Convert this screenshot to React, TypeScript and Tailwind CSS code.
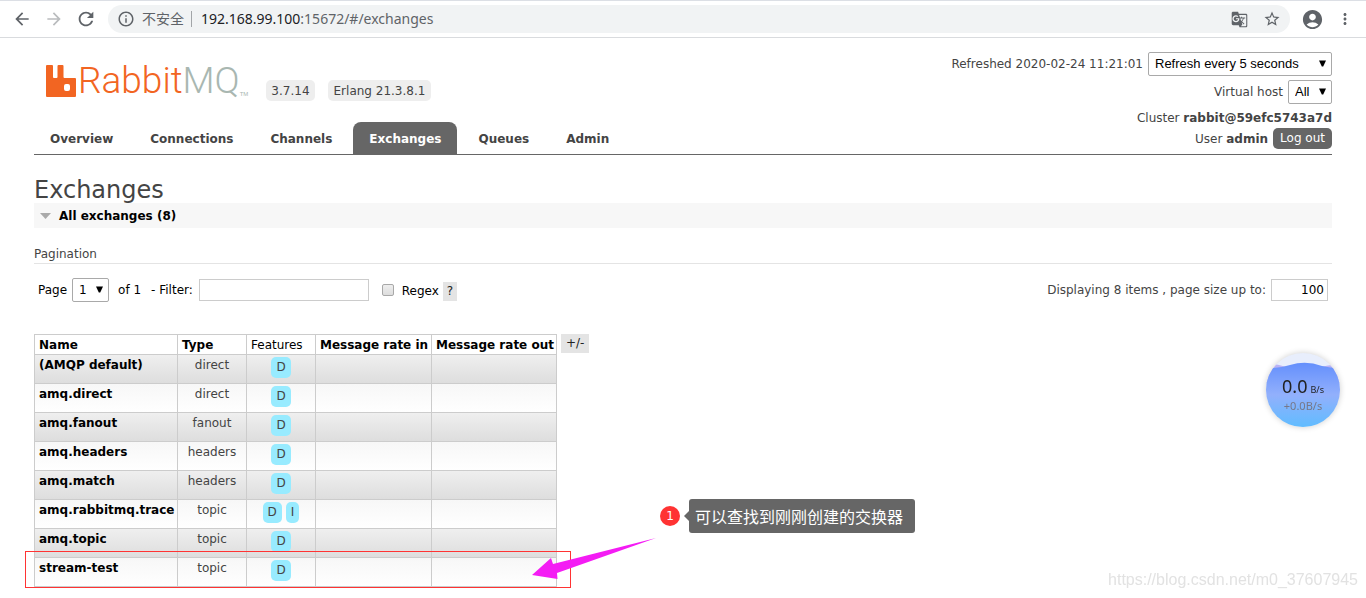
import { useState } from 'react'
import type { ReactNode } from 'react'
import clsx from 'clsx'
import {
  MdAccountCircle,
  MdArrowBack,
  MdArrowForward,
  MdGTranslate,
  MdInfoOutline,
  MdMoreVert,
  MdRefresh,
  MdStarBorder,
} from 'react-icons/md'

const tabs = ['Overview', 'Connections', 'Channels', 'Exchanges', 'Queues', 'Admin']

const exchanges = [
  { name: '(AMQP default)', type: 'direct', features: ['D'] },
  { name: 'amq.direct', type: 'direct', features: ['D'] },
  { name: 'amq.fanout', type: 'fanout', features: ['D'] },
  { name: 'amq.headers', type: 'headers', features: ['D'] },
  { name: 'amq.match', type: 'headers', features: ['D'] },
  { name: 'amq.rabbitmq.trace', type: 'topic', features: ['D', 'I'] },
  { name: 'amq.topic', type: 'topic', features: ['D'] },
  { name: 'stream-test', type: 'topic', features: ['D'] },
]

function Select({ id, className, children }: {
  id: string
  className?: string
  children: ReactNode
}) {
  return (
    <span className="relative inline-flex">
      <select
        id={id}
        className={clsx(
          'appearance-none h-6 rounded-[2px] border border-[#a9a9a9] bg-white pl-1.5 text-black',
          className,
        )}
      >
        {children}
      </select>
      <svg viewBox="0 0 7 7" className="pointer-events-none absolute right-1.5 top-2 size-[7px]">
        <path d="M0 0.5h7L4.2 6.5H2.8z" fill="#000" />
      </svg>
    </span>
  )
}

function BrowserBar() {
  const [url, setUrl] = useState('192.168.99.100:15672/#/exchanges')
  const [host, ...rest] = url.split(':')

  return (
    <div className="flex h-[38px] items-center border-b border-[#d9dbde] border-t border-t-[#dcdfe5] bg-white text-[#5f6368]">
      <button type="button" aria-label="Back" className="ml-3">
        <MdArrowBack className="size-5" />
      </button>
      <button type="button" aria-label="Forward" className="ml-3 text-[#babcbe]">
        <MdArrowForward className="size-5" />
      </button>
      <button type="button" aria-label="Reload" className="ml-[11px]">
        <MdRefresh className="size-[22px]" />
      </button>
      <div className="ml-[11px] flex h-7 flex-1 items-center rounded-full bg-[#f1f3f4] pl-[9px] pr-[9px]">
        <MdInfoOutline className="size-[18px]" />
        <span className="ml-[7px] font-['Noto_Sans','Noto_Sans_CJK_SC',sans-serif] text-sm">不安全</span>
        <span className="ml-[7px] mr-[9px] h-4 w-px bg-[#a2a5a8]" />
        <button
          type="button"
          onClick={() => setUrl(url)}
          className="flex-1 text-left font-['Noto_Sans',sans-serif] text-sm"
        >
          <span className="text-[#202124]">{host}</span>:{rest.join(':')}
        </button>
        <MdGTranslate className="size-[17px]" />
        <MdStarBorder className="ml-[15px] size-[18px]" />
      </div>
      <button type="button" aria-label="Profile" className="ml-[11px]">
        <MdAccountCircle className="size-[23px]" />
      </button>
      <button type="button" aria-label="Menu" className="ml-3 mr-3">
        <MdMoreVert className="size-[18px]" />
      </button>
    </div>
  )
}

function Logo() {
  return (
    <a href="#/" className="flex h-[42px] items-end">
      <svg viewBox="0 0 30 32" className="mb-1 h-8 w-[30px]">
        <path
          fill="#f26522"
          fillRule="evenodd"
          d="M1 0h5q1 0 1 1v11q0 1 1 1h2.500q1 0 1-1V1q0-1 1-1h4q1 0 1 1v11q0 1 1 1H29q1 0 1 1v17q0 1-1 1H1q-1 0-1-1V1q0-1 1-1zM20 19q-2 0-2 2v3q0 2 2 2h2q2 0 2-2v-3q0-2-2-2z"
        />
      </svg>
      <span className="ml-0.5 font-['Roboto',sans-serif] text-[37px] font-light leading-10 text-[#f26522]">
        Rabbit<span className="text-[#a9b7b1]">MQ</span>
      </span>
      <span className="mb-1 font-['Liberation_Sans',sans-serif] text-[6px] leading-[6px] text-[#a9b7b1]">TM</span>
    </a>
  )
}

function Header() {
  return (
    <header className="flex items-end justify-between border-b border-[#666]">
      <div>
        <div className="flex items-end pb-[21px] pl-3">
          <Logo />
          <span className="ml-[18px] rounded-[5px] bg-[#eee] px-[5px] pt-px text-xs leading-5">3.7.14</span>
          <span className="ml-[13px] rounded-[5px] bg-[#eee] px-1.5 pt-px text-xs leading-5">Erlang 21.3.8.1</span>
        </div>
        <nav className="flex gap-[5px]">
          {tabs.map((tab) => (
            <a
              key={tab}
              href={`#/${tab.toLowerCase()}`}
              className={clsx(
                'rounded-t-lg px-4 pt-0.5 text-xs font-bold leading-[30px]',
                tab === 'Exchanges' && 'bg-[#666] text-white',
              )}
            >
              {tab}
            </a>
          ))}
        </nav>
      </div>

      <div className="flex flex-col items-end pb-[5px] text-xs">
        <div className="flex items-center gap-[5px]">
          <label htmlFor="refresh">Refreshed 2020-02-24 11:21:01</label>
          <Select id="refresh" className="w-[184px] font-['Liberation_Sans',sans-serif] text-[13px]">
            <option>Refresh every 5 seconds</option>
          </Select>
        </div>
        <div className="mt-1 flex items-center gap-[5px]">
          <label htmlFor="vhost">Virtual host</label>
          <Select id="vhost" className="w-11 font-['Liberation_Sans',sans-serif] text-[13px]">
            <option>All</option>
          </Select>
        </div>
        <div className="mt-1 leading-5">
          Cluster <b>rabbit@59efc5743a7d</b>
        </div>
        <div className="flex items-center gap-[5px]">
          <span>
            User <b>admin</b>
          </span>
          <button type="button" className="rounded-[5px] bg-[#666] px-[7px] leading-[21px] text-white">
            Log out
          </button>
        </div>
      </div>
    </header>
  )
}

function Pagination() {
  return (
    <div className="flex items-center justify-between pt-[14px] text-xs text-black">
      <div className="flex items-center pl-1">
        <label htmlFor="page" className="mr-[5px]">Page</label>
        <Select id="page" className="w-[37px]">
          <option>1</option>
        </Select>
        <span className="ml-[9px]">of 1</span>
        <label htmlFor="filter" className="ml-2.5">- Filter:</label>
        <input id="filter" type="text" className="ml-1.5 h-[22px] w-[170px] border border-[#ccc] px-1" />
        <input
          id="regex"
          type="checkbox"
          className="ml-[13px] size-3 appearance-none rounded-[2px] border border-[#a8a8a8] bg-linear-to-b from-[#eee] to-[#ddd]"
        />
        <label htmlFor="regex" className="ml-2 pt-0.5">Regex</label>
        <button type="button" className="ml-1 mt-0.5 bg-[#e4e4e4] px-1 leading-[19px] text-[#222]">?</button>
      </div>
      <div className="flex items-center gap-[5px] pr-1 text-[#444]">
        <label htmlFor="size">Displaying 8 items , page size up to:</label>
        <input
          id="size"
          type="text"
          defaultValue="100"
          className="h-[22px] w-[57px] border border-[#ccc] px-[3px] text-right text-xs text-black"
        />
      </div>
    </div>
  )
}

function ExchangeTable() {
  return (
    <table className="w-[523px] table-fixed border-collapse text-xs leading-[15px] text-[#444]">
      <thead>
        <tr className="h-5 text-left text-black">
          <th className="w-[143px] border border-[#ccc] pl-1 pt-px">Name</th>
          <th className="w-[69px] border border-[#ccc] pl-1 pt-px">Type</th>
          <th className="w-[69px] border border-[#ccc] pl-1 pt-px font-normal">Features</th>
          <th className="w-[116px] whitespace-nowrap border border-[#ccc] pl-1 pt-px">Message rate in</th>
          <th className="whitespace-nowrap border border-[#ccc] pl-1 pt-px">Message rate out</th>
        </tr>
      </thead>
      <tbody>
        {exchanges.map((ex, i) => (
          <tr
            key={ex.name}
            className={clsx(
              'h-[29px] bg-linear-to-b align-top',
              i % 2 === 0 ? 'from-[#efefef] to-[#ddd]' : 'from-[#f7f7f7] to-white',
            )}
          >
            <td className="border border-[#ccc] pl-1 pt-[3px]">
              <a href={`#/exchanges/${ex.name}`} className="font-bold text-black">{ex.name}</a>
            </td>
            <td className="border border-[#ccc] pt-[3px] text-center">{ex.type}</td>
            <td className="border border-[#ccc] pt-0.5 text-center">
              <span className="flex justify-center gap-1">
                {ex.features.map((f) => (
                  <abbr key={f} className="rounded-[5px] bg-[#98ebff] px-[5px] leading-[21px]">{f}</abbr>
                ))}
              </span>
            </td>
            <td className="border border-[#ccc]" />
            <td className="border border-[#ccc]" />
          </tr>
        ))}
      </tbody>
    </table>
  )
}

function Annotation() {
  return (
    <>
      <div className="pointer-events-none absolute -left-[9px] top-[217px] h-[37px] w-[546px] border border-[#f33]" />
      <svg viewBox="0 0 126 44" className="absolute left-[497px] top-[203px] h-11 w-[126px]">
        <path d="M1 38L20 21L22 27L125 1L26 36L26.500 42z" fill="#f41cf4" />
      </svg>
      <div className="absolute left-[626px] top-[165px] flex items-center">
        <span className="size-5 rounded-full bg-[#f33] text-center text-xs leading-5 text-white">1</span>
        <svg viewBox="0 0 5 10" className="ml-1 h-2.5 w-[5px]">
          <path d="M5 0v10L0 5z" fill="#666" />
        </svg>
        <span className="whitespace-nowrap rounded-[3px] bg-[#666] pl-1.5 pr-3 font-['Noto_Sans_CJK_SC',sans-serif] text-base leading-[34px] text-white">
          可以查找到刚刚创建的交换器
        </span>
      </div>
    </>
  )
}

function SpeedBall() {
  return (
    <div className="fixed right-[26px] top-[353px] flex size-[74px] flex-col items-center overflow-hidden rounded-full bg-[#e8eefc] pt-[21px] shadow-[0_0_6px_rgba(0,0,0,0.2)]">
      <svg viewBox="0 0 74 74" className="absolute inset-0 size-full">
        <defs>
          <linearGradient id="water" x1="0" y1="0" x2="0" y2="1">
            <stop offset="0" stopColor="#648ffc" />
            <stop offset="0.5" stopColor="#92b0fc" />
            <stop offset="1" stopColor="#60bcff" />
          </linearGradient>
        </defs>
        <path d="M0 10Q12 11 24 15H50Q62 12 74 11V30H0z" fill="#b9b2f5" />
        <path d="M0 15Q12 16 24 12Q40 7 56 13Q64 15 74 15V74H0z" fill="url(#water)" />
      </svg>
      <div className="relative flex h-6 items-baseline gap-[3px] font-['Noto_Sans',sans-serif] text-lg leading-6 text-[#222]">
        0.0
        <span className="text-[9px]">B/s</span>
      </div>
      <div className="relative font-['Noto_Sans',sans-serif] text-[11px] leading-[15px] text-[#778]">+0.0B/s</div>
    </div>
  )
}

export default function App() {
  return (
    <div className="min-h-screen bg-white font-['DejaVu_Sans','Noto_Sans_CJK_SC',sans-serif] text-[#444]">
      <BrowserBar />
      <div className="px-[34px] pt-[14px]">
        <Header />
        <main className="pt-[22px]">
          <h1 className="text-2xl leading-[26px]">Exchanges</h1>
          <h2>
            <button
              type="button"
              className="flex w-full items-center gap-2 bg-[#f7f7f7] pl-1.5 pt-px text-xs font-bold leading-6 text-black"
            >
              <svg viewBox="0 0 11 6" className="h-1.5 w-[11px]">
                <path d="M0 0h11L5.500 6z" fill="#aaa" />
              </svg>
              All exchanges (8)
            </button>
          </h2>
          <h3 className="mt-[17px] border-b border-[#e4e4e4] text-xs leading-[18px]">Pagination</h3>
          <Pagination />
          <div className="relative mt-8 flex items-start gap-1">
            <ExchangeTable />
            <button type="button" className="bg-[#e4e4e4] px-[5px] text-xs leading-[19px] text-[#222]">+/-</button>
            <Annotation />
          </div>
        </main>
      </div>
      <SpeedBall />
      <div className="fixed bottom-2 right-2 font-['Liberation_Sans',sans-serif] text-base leading-5 text-[#e2e2e2]">
        https://blog.csdn.net/m0_37607945
      </div>
    </div>
  )
}
